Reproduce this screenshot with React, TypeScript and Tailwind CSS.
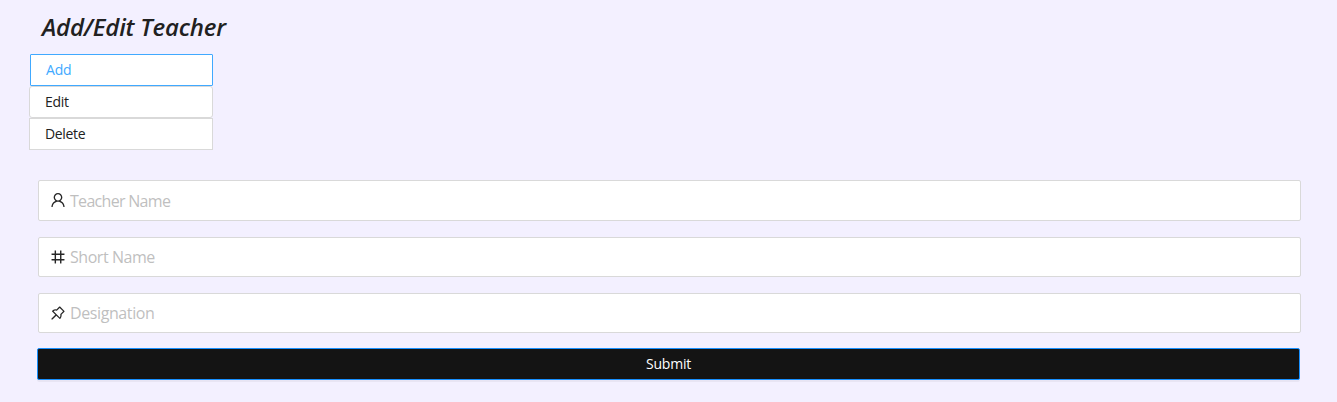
import type { IconType } from "react-icons";
import { AiOutlineUser, AiOutlineNumber, AiOutlinePushpin } from "react-icons/ai";

type FieldProps = { icon: IconType; label: string; box: string; text: string; glyph: string };

function Field({ icon: Icon, label, box, text, glyph }: FieldProps) {
  return (
    <div className={`flex items-center rounded-[2px] border border-[#d9d9d9] bg-white pl-[10px] ${box}`}>
      <Icon className={`h-[18px] w-[18px] shrink-0 text-[#262626] ${glyph}`} />
      <span className={`ml-[3px] whitespace-nowrap text-[16px] leading-6 text-[#bfbfbf] ${text}`}>{label}</span>
    </div>
  );
}

export default function App() {
  return (
    <div className="h-[402px] w-full overflow-hidden bg-[#f3f0ff] font-['Open_Sans','Noto_Sans',sans-serif] text-[#212121]">
      <h1 className="ml-[42px] h-[54px] whitespace-nowrap pt-[11px] text-[24px] font-semibold italic leading-8 tracking-[-0.2px]">
        Add/Edit Teacher
      </h1>
      <div className="ml-[29px] flex w-[184px] flex-col text-[14px] leading-[30px]">
        <button className="ml-px h-8 rounded-[1px] border border-[#40a9ff] bg-white pl-[15px] text-left text-[#40a9ff]">
          <span className="tracking-[-0.2px]">Add</span>
        </button>
        <button className="h-8 rounded-[3px] border border-[#d9d9d9] bg-white pl-[15px] text-left">
          <span className="tracking-[-0.3px]">Edit</span>
        </button>
        <button className="h-8 border border-[#d9d9d9] bg-white pl-[15px] text-left">
          <span className="tracking-[-0.35px]">Delete</span>
        </button>
      </div>
      <div className="ml-[38px] mt-[30px] flex w-[1263px] flex-col gap-4">
        <Field icon={AiOutlineUser} label="Teacher Name" box="h-[41px]" text="tracking-[-0.7px]" glyph="mb-px" />
        <Field icon={AiOutlineNumber} label="Short Name" box="h-10" text="tracking-[-0.45px]" glyph="" />
        <Field icon={AiOutlinePushpin} label="Designation" box="h-10" text="tracking-[-0.4px]" glyph="" />
      </div>
      <button className="ml-[37px] mt-[15px] block h-8 w-[1263px] rounded-[2px] border border-[#1890ff] bg-[#141414] text-center text-[14px] leading-[30px] text-white shadow-[0_2px_0_rgba(0,0,0,0.045)]">
        <span className="tracking-[-0.2px]">Submit</span>
      </button>
    </div>
  );
}
